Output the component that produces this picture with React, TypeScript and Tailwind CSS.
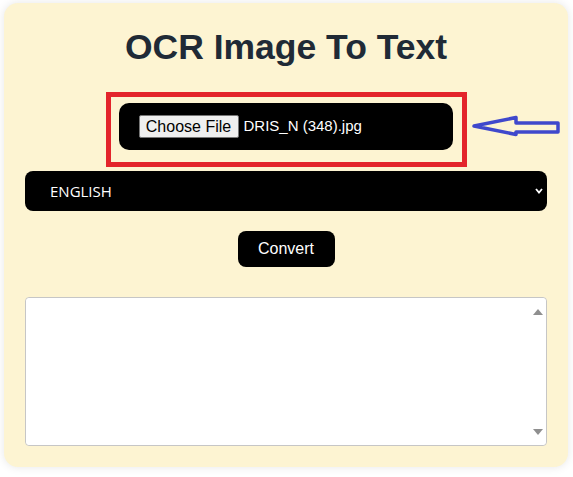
import React from "react";

const App = () => {
    return (
        <div className="min-h-screen bg-white pl-[4px] pr-[5px] pt-[3px] font-['Liberation_Sans',Arial,sans-serif]">
            <div className="relative flex flex-col items-center rounded-[14px] bg-[#fdf4d2] px-[21px] pt-[24px] pb-[21px] shadow-[0_0_10px_rgba(0,0,0,0.1)]">
                <h1 className="text-[35.5px] leading-[40px] font-bold text-[#202a36]">
                    OCR Image To Text
                </h1>

                {/* annotated file picker */}
                <div className="mt-[25px] border-[5px] border-[#e3242b] pl-[8px] pr-[9px] pt-[6px] pb-[12px]">
                    <div className="flex h-[47px] w-[334px] items-center rounded-[10px] bg-black pl-[20px]">
                        <button className="h-[23px] w-[100px] rounded-[2px] border border-[#767676] bg-[#efefef] text-[16px] leading-[21px] text-black">
                            Choose File
                        </button>
                        <span className="ml-[5px] text-[15px] text-white">
                            DRIS_N (348).jpg
                        </span>
                    </div>
                </div>

                <svg
                    className="absolute left-[464px] top-[109px] h-[32px] w-[100px]"
                    viewBox="0 0 100 32"
                    fill="none"
                >
                    <path
                        d="M6 14 L48 5.5 L48 11 L90 11 L90 20 L48 20 L48 22.5 Z"
                        stroke="#3f48cc"
                        strokeWidth="3.5"
                        strokeLinejoin="round"
                    />
                </svg>

                <div className="mt-[4px] flex h-[40px] w-full items-center justify-between rounded-[8px] bg-black pl-[25px] pr-[4px] font-['Open_Sans',sans-serif] text-[15px] text-white">
                    <span>ENGLISH</span>
                    <svg width="8" height="6" viewBox="0 0 8 6" fill="none">
                        <path
                            d="M1 1 L4 4.5 L7 1"
                            stroke="white"
                            strokeWidth="1.8"
                        />
                    </svg>
                </div>

                <button className="mt-[20px] h-[36px] w-[97px] rounded-[8px] bg-black text-[16px] text-white">
                    Convert
                </button>

                <div className="relative mt-[30px] h-[149px] w-full rounded-[4px] border border-[#c6c6c6] bg-white">
                    <textarea className="h-full w-full resize-none overflow-hidden rounded-[4px] bg-white outline-none" />
                    <svg
                        className="absolute right-[3px] top-[11px]"
                        width="10"
                        height="6"
                        viewBox="0 0 10 6"
                    >
                        <path d="M0 6 L5 0 L10 6 Z" fill="#8f8f8f" />
                    </svg>
                    <svg
                        className="absolute right-[3px] bottom-[10px]"
                        width="10"
                        height="6"
                        viewBox="0 0 10 6"
                    >
                        <path d="M0 0 L10 0 L5 6 Z" fill="#8f8f8f" />
                    </svg>
                </div>
            </div>
        </div>
    );
};

export default App;
